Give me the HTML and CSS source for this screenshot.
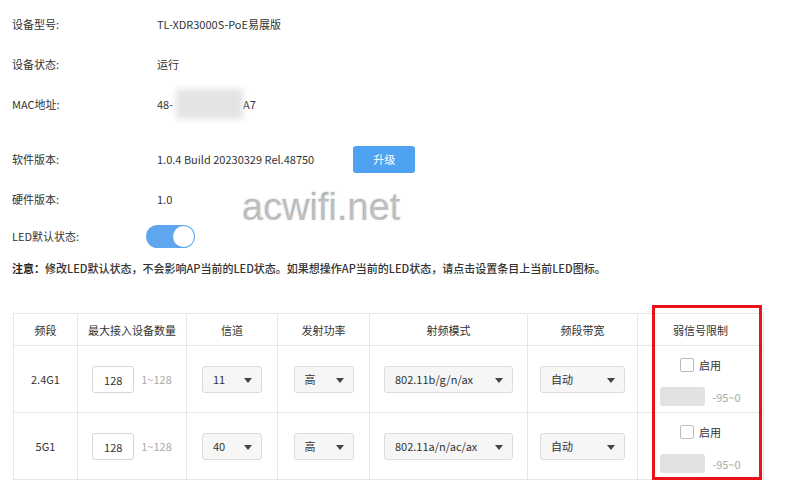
FILE: index.html
```html
<!DOCTYPE html>
<html>
    <head>
        <meta charset="UTF-8"/>
        <title>AP 设备信息</title>
        <link rel="stylesheet" href="styles.css">
    </head>
    <body>
        <div class="page">
            <div class="info">
                <div class="row"><span class="label">设备型号:</span><span class="value">TL-XDR3000S-PoE易展版</span></div>
                <div class="row"><span class="label">设备状态:</span><span class="value">运行</span></div>
                <div class="row"><span class="label">MAC地址:</span><span class="value">48-<span class="mask"></span>A7</span></div>
                <div class="row row-soft"><span class="label">软件版本:</span><span class="value">1.0.4 Build 20230329 Rel.48750</span><button class="btn-upgrade">升级</button></div>
                <div class="row"><span class="label">硬件版本:</span><span class="value">1.0</span></div>
                <div class="row row-led"><span class="label label-led">LED默认状态:</span><span class="toggle"><span class="knob"></span></span></div>
                <div class="note"><b>注意：</b>修改LED默认状态，不会影响AP当前的LED状态。如果想操作AP当前的LED状态，请点击设置条目上当前LED图标。</div>
            </div>

            <table class="radio-table">
                <colgroup>
                    <col style="width:64px"><col style="width:109px"><col style="width:91px"><col style="width:92px"><col style="width:158px"><col style="width:110px"><col style="width:126px">
                </colgroup>
                <thead>
                    <tr>
                        <th>频段</th>
                        <th>最大接入设备数量</th>
                        <th>信道</th>
                        <th>发射功率</th>
                        <th>射频模式</th>
                        <th>频段带宽</th>
                        <th>弱信号限制</th>
                    </tr>
                </thead>
                <tbody>
                    <tr>
                        <td>2.4G1</td>
                        <td><span class="num-input">128</span><span class="hint">1~128</span></td>
                        <td><span class="select w60">11<i class="arrow"></i></span></td>
                        <td><span class="select w60">高<i class="arrow"></i></span></td>
                        <td><span class="select w129">802.11b/g/n/ax<i class="arrow"></i></span></td>
                        <td><span class="select w85">自动<i class="arrow"></i></span></td>
                        <td>
                            <div class="weak">
                                <label class="check"><span class="box"></span>启用</label>
                                <div><span class="grey-input"></span><span class="hint">-95~0</span></div>
                            </div>
                        </td>
                    </tr>
                    <tr>
                        <td>5G1</td>
                        <td><span class="num-input">128</span><span class="hint">1~128</span></td>
                        <td><span class="select w60">40<i class="arrow"></i></span></td>
                        <td><span class="select w60">高<i class="arrow"></i></span></td>
                        <td><span class="select w129">802.11a/n/ac/ax<i class="arrow"></i></span></td>
                        <td><span class="select w85">自动<i class="arrow"></i></span></td>
                        <td>
                            <div class="weak">
                                <label class="check"><span class="box"></span>启用</label>
                                <div><span class="grey-input"></span><span class="hint">-95~0</span></div>
                            </div>
                        </td>
                    </tr>
                </tbody>
            </table>

            <div class="watermark">acwifi.net</div>
            <div class="highlight"></div>
        </div>
    </body>
</html>
```

FILE: styles.css
```css
body {
    margin: 0;
    padding: 0;
    background: #fff;
    color: #333;
    font-family: "Noto Sans CJK SC", "Noto Sans", sans-serif;
    font-size: 11px;
}

.page {
    position: relative;
    width: 800px;
    height: 483px;
    overflow: hidden;
}

.info {
    padding: 4px 0 0 12px;
}

.row {
    display: flex;
    align-items: center;
    height: 40px;
}

.row-soft {
    margin-top: 15px;
}

.row-led {
    height: 34px;
}

.label {
    width: 145px;
    flex-shrink: 0;
}

.label-led {
    width: 134px;
}

.value {
    display: flex;
    align-items: center;
}

.mask {
    display: inline-block;
    width: 67px;
    height: 30px;
    background: #e4e4e4;
    filter: blur(3px);
    margin-left: 3px;
}

.btn-upgrade {
    margin-left: 39px;
    width: 62px;
    height: 27px;
    border: none;
    border-radius: 3px;
    background: #4ea2f1;
    color: #fff;
    font-family: inherit;
    font-size: 11px;
    padding: 0;
}

.toggle {
    display: inline-flex;
    align-items: center;
    justify-content: flex-end;
    width: 49px;
    height: 23px;
    border-radius: 12px;
    background: #5ea7ef;
    padding: 0 1px;
    box-sizing: border-box;
}

.knob {
    width: 21px;
    height: 21px;
    border-radius: 50%;
    background: #fff;
}

.note {
    height: 30px;
    line-height: 30px;
    color: #333;
    font-weight: 500;
}

.note b {
    font-weight: 700;
    color: #222;
}

.radio-table {
    margin: 30px 0 0 13px;
    width: 750px;
    table-layout: fixed;
    border-collapse: collapse;
    border: 1px solid #dcdcdc;
}

.radio-table th,
.radio-table td {
    border: 1px solid #e6e6e6;
    text-align: center;
    padding: 0;
    white-space: nowrap;
}

.radio-table th {
    height: 31px;
    font-weight: normal;
    color: #333;
}

.radio-table td {
    height: 66px;
}

.num-input {
    display: inline-block;
    width: 42px;
    height: 27px;
    line-height: 27px;
    border: 1px solid #d6d6d6;
    border-radius: 3px;
    box-sizing: border-box;
    vertical-align: middle;
    text-align: center;
}

.hint {
    color: #aaa;
    margin-left: 7px;
    vertical-align: middle;
}

.select {
    position: relative;
    display: inline-block;
    height: 27px;
    line-height: 25px;
    border: 1px solid #dcdcdc;
    border-radius: 3px;
    background: #f6f6f6;
    box-sizing: border-box;
    padding-left: 10px;
    text-align: left;
    vertical-align: middle;
}

.w60 { width: 60px; }
.w129 { width: 129px; }
.w85 { width: 85px; }

.arrow {
    position: absolute;
    right: 9px;
    top: 11px;
    width: 0;
    height: 0;
    border-left: 4px solid transparent;
    border-right: 4px solid transparent;
    border-top: 5px solid #444;
}

.weak {
    display: flex;
    flex-direction: column;
    align-items: center;
    gap: 14px;
    margin-top: 5px;
}

.check {
    display: flex;
    align-items: center;
    gap: 5px;
}

.box {
    width: 12px;
    height: 12px;
    border: 1px solid #bbb;
    border-radius: 2px;
    background: #fff;
}

.grey-input {
    display: inline-block;
    width: 45px;
    height: 19px;
    border-radius: 3px;
    background: #e2e2e2;
    vertical-align: middle;
}

.watermark {
    position: absolute;
    left: 242px;
    top: 186px;
    font-family: "Liberation Sans", Arial, sans-serif;
    font-size: 38px;
    color: rgba(140, 140, 140, 0.5);
    text-shadow: 1px 1px 2px rgba(255, 255, 255, 0.9), 0 0 2px rgba(120, 120, 120, 0.4);
    pointer-events: none;
}

.highlight {
    position: absolute;
    left: 652px;
    top: 305px;
    width: 110px;
    height: 175px;
    border: 3px solid #e8131b;
    box-sizing: border-box;
}
```
